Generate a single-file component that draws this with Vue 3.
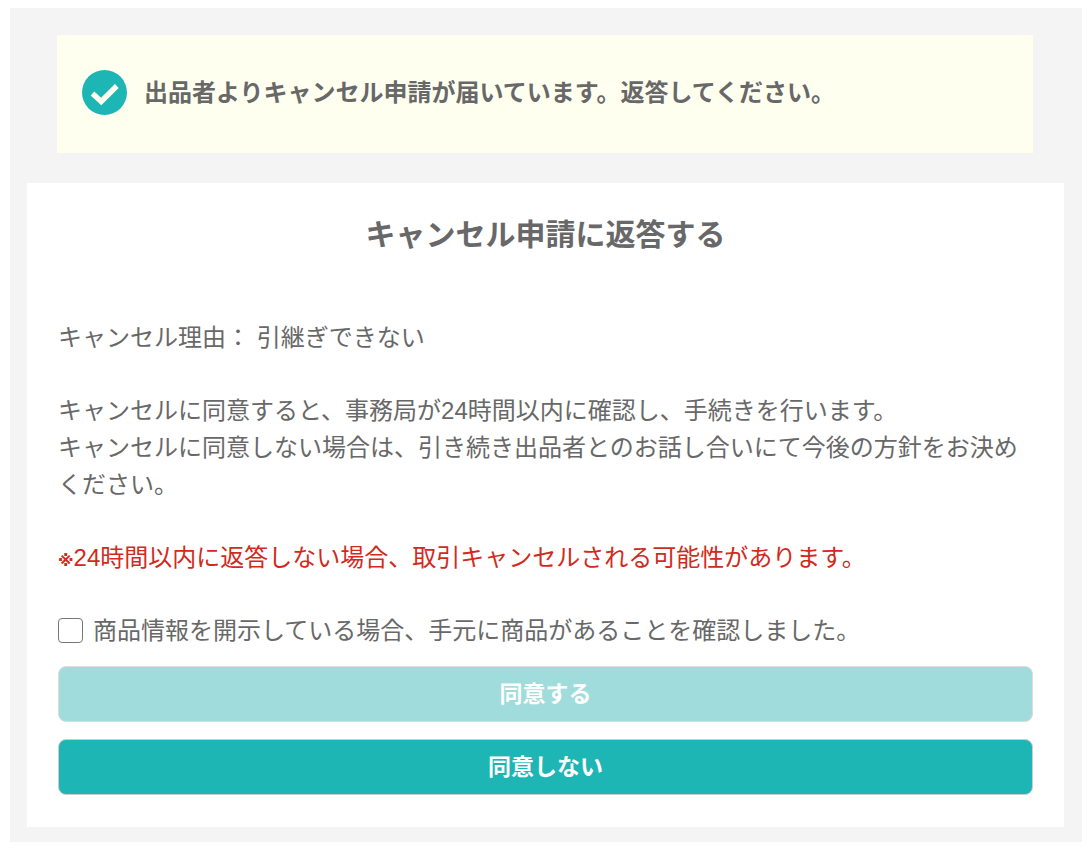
<script setup>
import { ref } from 'vue'

const confirmed = ref(false)
</script>

<template>
  <main class="page">
    <section class="notice" role="status">
      <svg class="notice-icon" viewBox="0 0 45 45" aria-hidden="true">
        <circle cx="22.5" cy="22.5" r="22.5" fill="#1eb5b5" />
        <path d="M10.5 23.5 L19.2 31.5 L34.8 16" fill="none" stroke="#fffff0" stroke-width="5.4" />
      </svg>
      <p class="notice-text">出品者よりキャンセル申請が届いています。返答してください。</p>
    </section>

    <section class="card">
      <h1 class="title">キャンセル申請に返答する</h1>
      <div class="body">
        <p>キャンセル理由： 引継ぎできない</p>
        <p>
          キャンセルに同意すると、事務局が24時間以内に確認し、手続きを行います。<br />キャンセルに同意しない場合は、引き続き出品者とのお話し合いにて今後の方針をお決めください。
        </p>
        <p class="warning"><span class="mark">※</span>24時間以内に返答しない場合、取引キャンセルされる可能性があります。</p>
        <label class="confirm" for="confirm">
          <input id="confirm" v-model="confirmed" type="checkbox" />
          <span>商品情報を開示している場合、手元に商品があることを確認しました。</span>
        </label>
      </div>
      <form class="actions" @submit.prevent>
        <button class="button" type="submit" :disabled="!confirmed">同意する</button>
        <button class="button" type="button">同意しない</button>
      </form>
    </section>
  </main>
</template>

<style>
body {
  background: #fff;
}
</style>

<style scoped>
.page {
  margin: 8px 6px 24px 10px;
  padding: 27px 18px 15px 17px;
  background: #f4f4f4;
  color: #686868;
  font-family: "Liberation Sans", "Noto Sans CJK JP", sans-serif;
  font-size: 24px;
  line-height: 37px;
}

p,
h1 {
  margin: 0;
}

.notice {
  display: flex;
  align-items: center;
  gap: 17px;
  margin: 0 31px 30px 30px;
  padding: 35px 25px 38px;
  background: #fffff0;
}

.notice-icon {
  flex: none;
  width: 45px;
  height: 45px;
}

.notice-text {
  font-weight: 700;
}

.card {
  padding: 30px 31px 32px;
  background: #fff;
}

.title {
  font-size: 30px;
  line-height: 44px;
  font-weight: 700;
  text-align: center;
}

.body {
  display: flex;
  flex-direction: column;
  gap: 36px;
  margin-top: 62px;
}

.warning {
  color: #d22a1c;
}

.mark {
  font-family: "DejaVu Sans", "Noto Sans CJK JP", sans-serif;
  font-size: 16px;
  font-weight: 700;
  line-height: 1;
}

.confirm {
  display: flex;
  align-items: center;
  gap: 10px;
}

.confirm input {
  appearance: none;
  flex: none;
  width: 25px;
  height: 25px;
  margin: 0;
  border: 1px solid #767676;
  border-radius: 4px;
  background: #fff;
}

.confirm input:checked {
  background: #1eb5b5;
  box-shadow: inset 0 0 0 4px #fff;
}

.actions {
  display: flex;
  flex-direction: column;
  gap: 17px;
  margin-top: 17px;
}

.button {
  height: 56px;
  padding: 0;
  border: 1px solid #ccc;
  border-radius: 8px;
  background: #1eb5b5;
  color: #fff;
  font-family: inherit;
  font-size: 23px;
  font-weight: 700;
  line-height: 36px;
  cursor: pointer;
}

.button:disabled {
  border-color: #dcdcdc;
  background: #9fdcdb;
  cursor: default;
}
</style>
